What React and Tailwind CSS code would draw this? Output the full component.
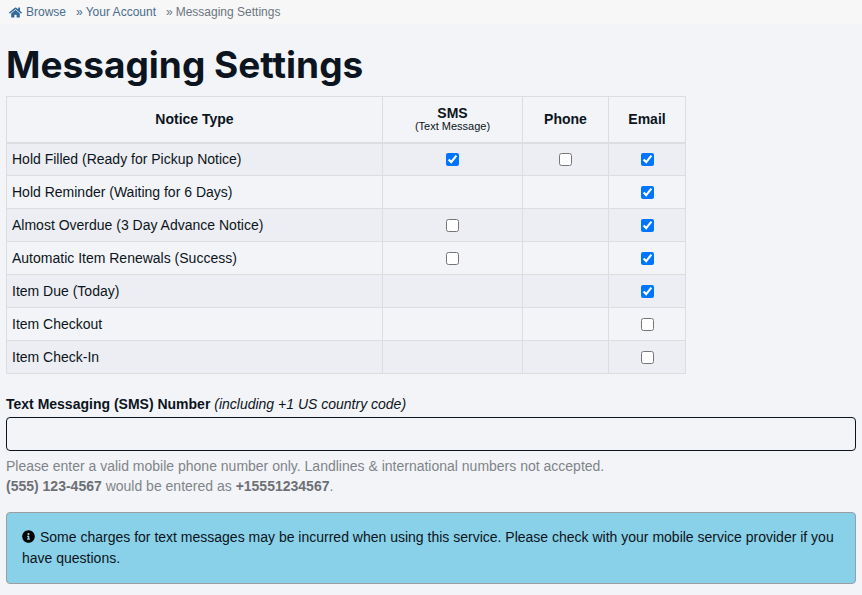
import React from "react";
import { FaHome, FaInfoCircle } from "react-icons/fa";

const rows = [
  { label: "Hold Filled (Ready for Pickup Notice)", sms: true, phone: false, email: true },
  { label: "Hold Reminder (Waiting for 6 Days)", email: true },
  { label: "Almost Overdue (3 Day Advance Notice)", sms: false, email: true },
  { label: "Automatic Item Renewals (Success)", sms: false, email: true },
  { label: "Item Due (Today)", email: true },
  { label: "Item Checkout", email: false },
  { label: "Item Check-In", email: false },
];

const Check = ({ value }) =>
  value === undefined ? null : (
    <input type="checkbox" defaultChecked={value} className="m-0 align-middle block mx-auto" />
  );

const App = () => {
  return (
    <div className="min-h-[595px] bg-[#f3f4f8] font-['Liberation_Sans',Arial,sans-serif] text-[14px] text-[#0c1420] overflow-hidden">
      {/* Breadcrumbs */}
      <div className="h-6 bg-[#f7f7f8] pl-[9px] flex items-center text-[12px] text-[#4a6d8c]">
        <FaHome className="text-[13px] text-[#33689a] mr-1" />
        <span>Browse</span>
        <span className="ml-[10px] mr-[3px] text-[#4a6d8c]">»</span>
        <span>Your Account</span>
        <span className="ml-[10px] mr-[3px] text-[#6c757d]">»</span>
        <span className="text-[#6c757d]">Messaging Settings</span>
      </div>

      <h1 className="mt-[18px] ml-[6px] h-[54px] font-['Inter',sans-serif] font-bold text-[37px] leading-[46px] text-[#0c1420]">
        Messaging Settings
      </h1>

      {/* Notice table */}
      <table className="ml-[6px] w-[680px] table-fixed border-collapse">
        <thead>
          <tr className="h-[46px]">
            <th className="w-[376px] border border-[#dcdddf] border-b-2 font-bold">Notice Type</th>
            <th className="w-[140px] border border-[#dcdddf] border-b-2 font-bold leading-[14px]">
              SMS
              <div className="text-[11px] font-normal leading-[13px]">(Text Message)</div>
            </th>
            <th className="w-[86px] border border-[#dcdddf] border-b-2 font-bold">Phone</th>
            <th className="border border-[#dcdddf] border-b-2 font-bold">Email</th>
          </tr>
        </thead>
        <tbody>
          {rows.map((row, i) => (
            <tr key={row.label} className={i % 2 === 0 ? "h-[33px] bg-[#eceef3]" : "h-[33px]"}>
              <td className="border border-[#dcdddf] px-[5px]">{row.label}</td>
              <td className="border border-[#dcdddf]"><Check value={row.sms} /></td>
              <td className="border border-[#dcdddf]"><Check value={row.phone} /></td>
              <td className="border border-[#dcdddf]"><Check value={row.email} /></td>
            </tr>
          ))}
        </tbody>
      </table>

      {/* SMS number */}
      <div className="mx-[6px] mt-[22px]">
        <label className="block h-[18px] leading-[16px]">
          <b>Text Messaging (SMS) Number</b> <i>(including +1 US country code)</i>
        </label>
        <input
          type="text"
          className="mt-[3px] block w-full h-[34px] rounded-[4px] border border-[#0c1420] bg-transparent"
        />
        <p className="mt-[5px] leading-[20px] text-[#808488]">
          Please enter a valid mobile phone number only. Landlines &amp; international numbers not accepted.
          <br />
          <b className="text-[#6c7075]">(555) 123-4567</b> would be entered as{" "}
          <b className="text-[#6c7075]">+15551234567</b>.
        </p>
        <div className="mt-[16px] h-[72px] rounded-[4px] border border-[#9a9ea3] bg-[#89d1e8] px-[15px] py-[14px] leading-[21px] text-[#0c1420]">
          <FaInfoCircle className="inline-block text-[13px] text-black align-[-1px] mr-[5px]" />
          Some charges for text messages may be incurred when using this service. Please check with your mobile service
          provider if you have questions.
        </div>
      </div>
    </div>
  );
};

export default App;
